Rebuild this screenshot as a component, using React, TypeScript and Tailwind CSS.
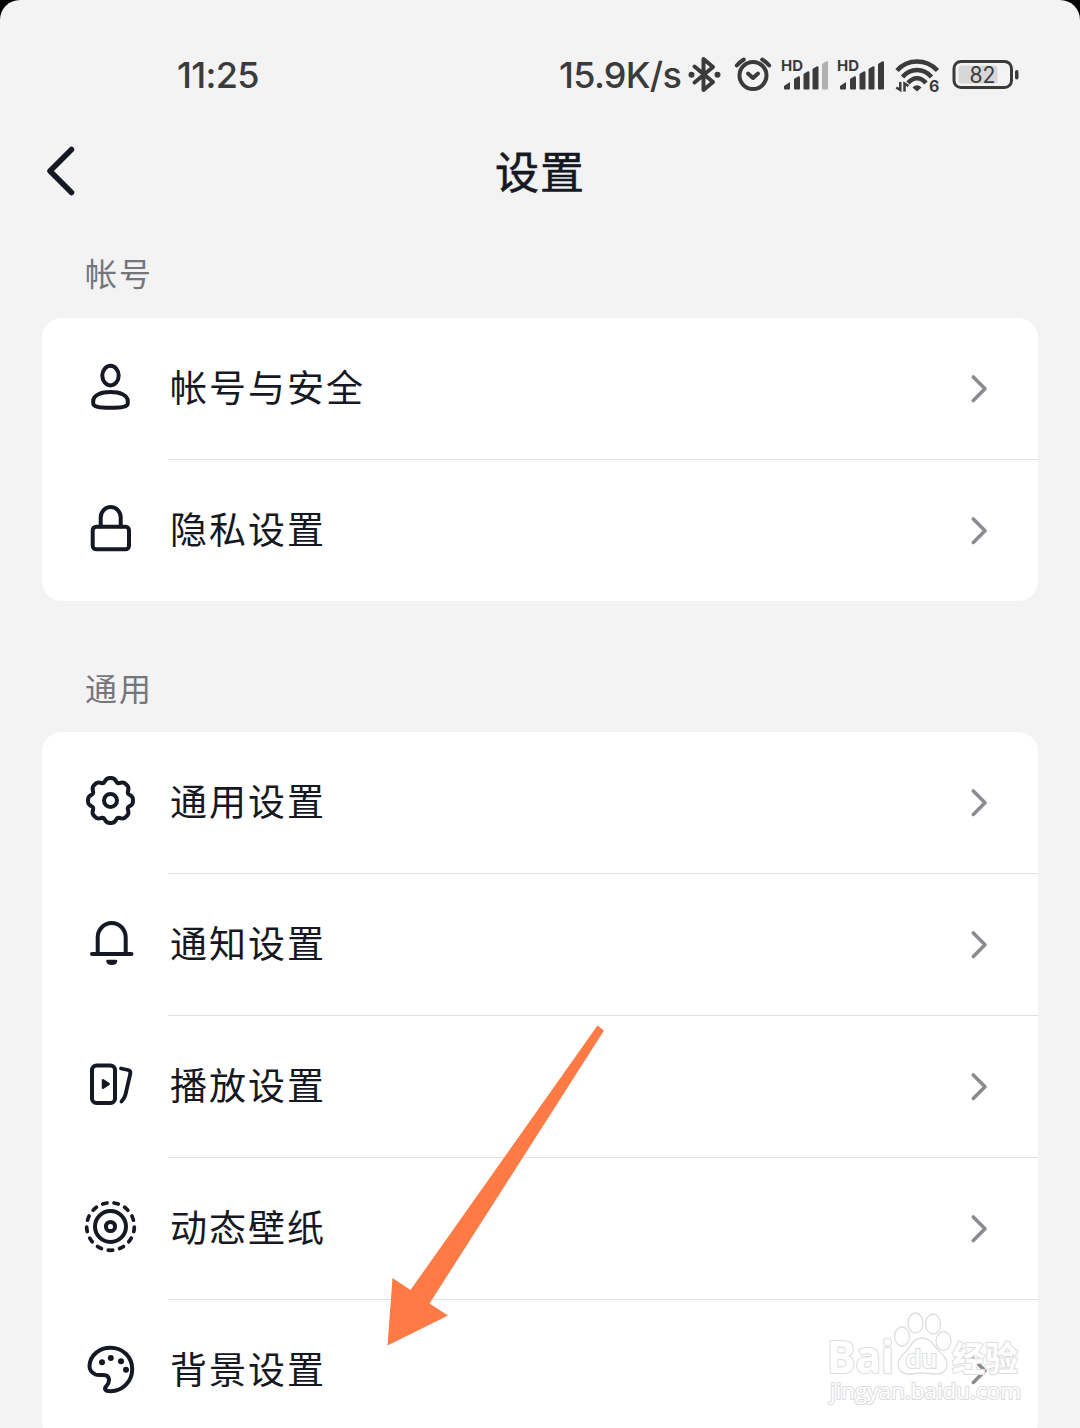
import React from 'react';

interface SettingItem {
    label: string;
    icon: React.ReactNode;
}

interface SettingSectionProps {
    items: SettingItem[];
}

// Wavy outline of the gear: eight round lobes with tighter valleys
const gearPoints = Array.from({ length: 144 }, (_, i) => {
    const a = (i / 144) * Math.PI * 2;
    const r = 21.1 + 1.8 * Math.cos(a * 8) - 0.45 * Math.cos(a * 16);
    return `${(28.5 + r * Math.cos(a)).toFixed(2)},${(28.5 + r * Math.sin(a)).toFixed(2)}`;
}).join(' ');

const Icon: React.FC<{ children: React.ReactNode }> = ({ children }) => (
    <svg
        viewBox="0 0 56 56"
        className="w-14 h-14"
        fill="none"
        stroke="#161823"
        strokeWidth="4"
        strokeLinecap="round"
        strokeLinejoin="round"
    >
        {children}
    </svg>
);

const UserIcon = () => (
    <Icon>
        <ellipse cx="28.5" cy="17.6" rx="8.2" ry="9.8" />
        <path d="M28.5 34c-9 0-17.3 2.8-17.3 9.200v2c0 3.500 6.300 4.500 17.300 4.500s17.300-1 17.300-4.500v-2c0-6.400-8.300-9.200-17.300-9.200Z" />
    </Icon>
);

const LockIcon = () => (
    <Icon>
        <rect x="10.700" y="26.700" width="36.300" height="22.600" rx="3.500" />
        <path d="M18.700 26.500v-9a10 10.500 0 0 1 20 0v9" />
    </Icon>
);

const GearIcon = () => (
    <Icon>
        <polygon points={gearPoints} />
        <circle cx="28.500" cy="28.500" r="6.500" />
    </Icon>
);

const BellIcon = () => (
    <Icon>
        <path d="M10 40h39.500M15.700 39.500V23.500a14 14.500 0 0 1 28 0V39.500" />
        <path d="M25.500 46.500h8.500q.7 0 .5.800a4.800 3.500 0 0 1-9.500 0q-.1-.8.500-.8Z" fill="#161823" strokeWidth="1.500" />
    </Icon>
);

const PlayIcon = () => (
    <Icon>
        <rect x="10" y="9.500" width="23" height="37.500" rx="4.500" />
        <path d="M21 24.300v7.400l5.700-3.700Z" fill="#161823" strokeWidth="2.500" />
        <path d="M39 12.500l7 1.500q2.900.7 2.300 3.600L43.500 38.500q-.8 3.500-4 7" strokeWidth="3.800" />
    </Icon>
);

const WallpaperIcon = () => (
    <Icon>
        <circle cx="28.500" cy="28.500" r="15.500" />
        <circle cx="28.500" cy="28.500" r="4.600" />
        {Array.from({ length: 13 }, (_, i) => (
            <path key={i} d="M26.300 52.200q2.200.2 4.400 0" strokeWidth="3.700" transform={`rotate(${(i * 360) / 13} 28.5 28.5)`} />
        ))}
    </Icon>
);

const PaletteIcon = () => (
    <Icon>
        <path d="M28.500 7.700c12 0 21.700 9 21.700 21.300S41 51.200 28.500 51.200c-5.500 0-6.700-2.200-4.200-5 3.500-3.500 3.600-8.700.2-10.700-3.500-1.600-7.500.6-11-1C9.500 32.500 7.500 29.700 7.500 26.200 8 14.700 18 7.700 28.500 7.700Z" />
        <g fill="#161823" stroke="none">
            <circle cx="20" cy="22.300" r="3" />
            <circle cx="28.800" cy="18" r="3" />
            <circle cx="39" cy="21.200" r="3" />
            <circle cx="44" cy="29.700" r="3" />
        </g>
    </Icon>
);

const Signal: React.FC<{ weak?: boolean }> = ({ weak }) => (
    <svg viewBox="0 0 48 40" className="w-12 h-10" fill="#3b3b3b">
        <text x="0" y="15.500" fontSize="15" fontWeight="700" textLength="22" lengthAdjust="spacingAndGlyphs">HD</text>
        <path d="M3 33.500v-2.500l6-4v6.500a1 1 0 0 1-1 1H4a1 1 0 0 1-1-1Z" />
        <path d="M13 33.500V24l4-2.500q2-1 2 1v11a1 1 0 0 1-1 1h-4a1 1 0 0 1-1-1Z" />
        <path d="M22.500 33.500V19l4-2.500q2-1 2 1v16a1 1 0 0 1-1 1h-4a1 1 0 0 1-1-1Z" />
        <path d="M31.500 33.500V14l4-2.500q2-1 2 1v21a1 1 0 0 1-1 1h-4a1 1 0 0 1-1-1Z" />
        <path d="M41 33.500V9l4-2.500q2-1 2 1v26a1 1 0 0 1-1 1h-4a1 1 0 0 1-1-1Z" fill={weak ? '#b0b0b0' : '#3b3b3b'} />
    </svg>
);

const StatusBar = () => (
    <div className="flex h-[130px] pt-[55px] pl-[177px] text-[#3b3b3b] font-['Inter',sans-serif]">
        <div className="w-[382px] text-[36px] leading-[41px] font-medium tracking-[-0.7px]">11:25</div>
        <div className="w-[128px] text-[36px] leading-[41px] font-medium tracking-[-0.7px] whitespace-nowrap">15.9K/s</div>
        <svg viewBox="0 0 36 40" className="w-9 h-10" fill="none" stroke="#3b3b3b" strokeWidth="4" strokeLinejoin="round" strokeLinecap="round">
            <path d="M7.500 11.500L26 27l-9.500 8V4L26 12 7.500 27.500" />
            <circle cx="4.500" cy="19.700" r="1.500" strokeWidth="3" />
            <circle cx="30.500" cy="19.700" r="1.500" strokeWidth="3" />
        </svg>
        <svg viewBox="0 0 40 40" className="w-10 h-10 ml-2.5" fill="none" stroke="#3b3b3b" strokeWidth="4" strokeLinecap="round" strokeLinejoin="round">
            <circle cx="20" cy="20.500" r="13.500" />
            <path d="M15 18.500l5 4.500 5-4.500" />
            <path d="M3.800 10.500q3-3.500 7-6M36.200 10.500q-3-3.500-7-6" />
        </svg>
        <div className="flex gap-2 ml-2">
            <Signal weak />
            <Signal />
        </div>
        <svg viewBox="0 0 48 40" className="w-12 h-10 ml-2" fill="none" stroke="#3b3b3b" strokeWidth="4.500">
            <path d="M4 15.500Q12 6.500 24 6.500t20.500 9" />
            <path d="M9.500 22Q15.500 15 24 15t14.500 7" />
            <path d="M15 28Q19 23.200 24 23.200T33 28" />
            <path d="M19.500 32.500q4.500-4.500 9 0L24 36.500Z" fill="#3b3b3b" stroke="none" />
            <path d="M7.300 27v8l-4-2.500M11.500 36.500v-8l4 2.500" strokeWidth="2.500" />
            <text x="36" y="36.500" fontSize="16" fontWeight="700" fill="#3b3b3b" stroke="none">6</text>
        </svg>
        <svg viewBox="0 0 70 40" className="w-[70px] h-10 ml-2.5" fill="none">
            <rect x="3" y="6.500" width="57.500" height="26" rx="7" stroke="#3b3b3b" strokeWidth="3" />
            <rect x="7.500" y="10.500" width="39" height="18" rx="3" fill="#d7d7d7" />
            <rect x="64" y="15" width="3.500" height="9.500" rx="1.700" fill="#3b3b3b" />
            <text x="18.500" y="28" fontSize="23" fontWeight="400" fill="#3b3b3b" textLength="26" lengthAdjust="spacingAndGlyphs">82</text>
        </svg>
    </div>
);

const Chevron = () => (
    <svg viewBox="0 0 24 36" className="w-6 h-9" fill="none" stroke="#8a8b90" strokeWidth="3.600" strokeLinecap="round" strokeLinejoin="round">
        <path d="M6.300 7L18 18.700 6.300 30.400" />
    </svg>
);

const SettingSection: React.FC<SettingSectionProps> = ({ items }) => (
    <div className="mx-[42px] rounded-[20px] bg-white overflow-hidden">
        {items.map((item, i) => (
            <div key={item.label} className="flex">
                <div className="w-[126px] pl-10 pt-10">{item.icon}</div>
                <div
                    className={`flex flex-1 items-center justify-between pl-0.5 pr-[47px] pb-px ${i < items.length - 1
                        ? 'h-[142px] border-b border-[#e0e0e1]'
                        : 'h-[141px]'
                        }`}
                >
                    <span className="pb-1 text-[37px] leading-none tracking-[2px] text-[#161823]">{item.label}</span>
                    <Chevron />
                </div>
            </div>
        ))}
    </div>
);

const Watermark = () => (
    <svg
        viewBox="0 0 200 100"
        className="absolute left-[826px] top-[1308px] w-[200px] h-[100px]"
        fill="#ffffff"
        stroke="#dedede"
        strokeWidth="1.300"
        fontFamily="'Open Sans', 'Noto Sans CJK SC', sans-serif"
    >
        <g paintOrder="stroke" strokeWidth="2.200" strokeLinejoin="round">
            <text x="1" y="64.500" fontSize="44" fontWeight="700" textLength="67" lengthAdjust="spacingAndGlyphs">Bai</text>
            <text x="126" y="62.500" fontSize="34" fontWeight="700" textLength="66" lengthAdjust="spacingAndGlyphs">经验</text>
            <text x="4" y="90.500" fontSize="22" fontWeight="400" textLength="191" lengthAdjust="spacingAndGlyphs">jingyan.baidu.com</text>
        </g>
        <ellipse cx="82" cy="28.500" rx="7.500" ry="9.500" transform="translate(-6 0)" />
        <ellipse cx="89.500" cy="15" rx="7.500" ry="10" />
        <ellipse cx="107" cy="16" rx="7.500" ry="10" />
        <ellipse cx="117.500" cy="33" rx="7.500" ry="9.500" />
        <path d="M96 30c8 0 11 6 15 11 5 5 10 9 10 15 0 7-5 10-11 10-5 0-9-1-14-1s-9 1-14 1c-6 0-10-4-10-10 0-7 6-10 10-15s6-11 14-11Z" />
        <text x="79.500" y="60" fontSize="25" fontWeight="600" textLength="32" lengthAdjust="spacingAndGlyphs" paintOrder="stroke" strokeWidth="2.200">du</text>
    </svg>
);

const accountItems: SettingItem[] = [
    { label: '帐号与安全', icon: <UserIcon /> },
    { label: '隐私设置', icon: <LockIcon /> },
];

const generalItems: SettingItem[] = [
    { label: '通用设置', icon: <GearIcon /> },
    { label: '通知设置', icon: <BellIcon /> },
    { label: '播放设置', icon: <PlayIcon /> },
    { label: '动态壁纸', icon: <WallpaperIcon /> },
    { label: '背景设置', icon: <PaletteIcon /> },
];

export default function App() {
    return (
        <div className="w-[1080px] h-[1428px] bg-black overflow-hidden font-['Noto_Sans_CJK_SC',sans-serif]">
            <div className="relative h-full rounded-t-[20px] bg-[#f3f3f3] overflow-hidden">
                <StatusBar />

                {/* Title bar */}
                <div className="flex h-[86px] items-center">
                    <div className="w-[120px] pl-10">
                        <svg viewBox="0 0 40 60" className="w-10 h-[60px]" fill="none" stroke="#161823" strokeWidth="5.500" strokeLinecap="round" strokeLinejoin="round">
                            <path d="M31.500 6.500L10 28 31.500 49.500" />
                        </svg>
                    </div>
                    <h1 className="flex-1 pb-1.5 text-center text-[44px] leading-none tracking-[1px] text-[#161823] [-webkit-text-stroke:0.6px_#161823]">设置</h1>
                    <div className="w-[120px]" />
                </div>

                <div className="flex h-[102px] items-center pl-[85px] pt-2.5 text-[32px] leading-none tracking-[2px] text-[#75767b]">帐号</div>
                <SettingSection items={accountItems} />

                <div className="flex h-[131px] items-center pl-[85px] pt-10 text-[32px] leading-none tracking-[2px] text-[#75767b]">通用</div>
                <SettingSection items={generalItems} />

                {/* Pointer arrow */}
                <svg viewBox="0 0 220 322" className="absolute left-[386px] top-[1025px] w-[220px] h-[322px]" fill="#ff7a45">
                    <path d="M211.500 .5L218 5.500 43.500 278.500 62 290.500 1.500 320.500 6.500 253 24.500 265Z" />
                </svg>

                <Watermark />
            </div>
        </div>
    );
}
